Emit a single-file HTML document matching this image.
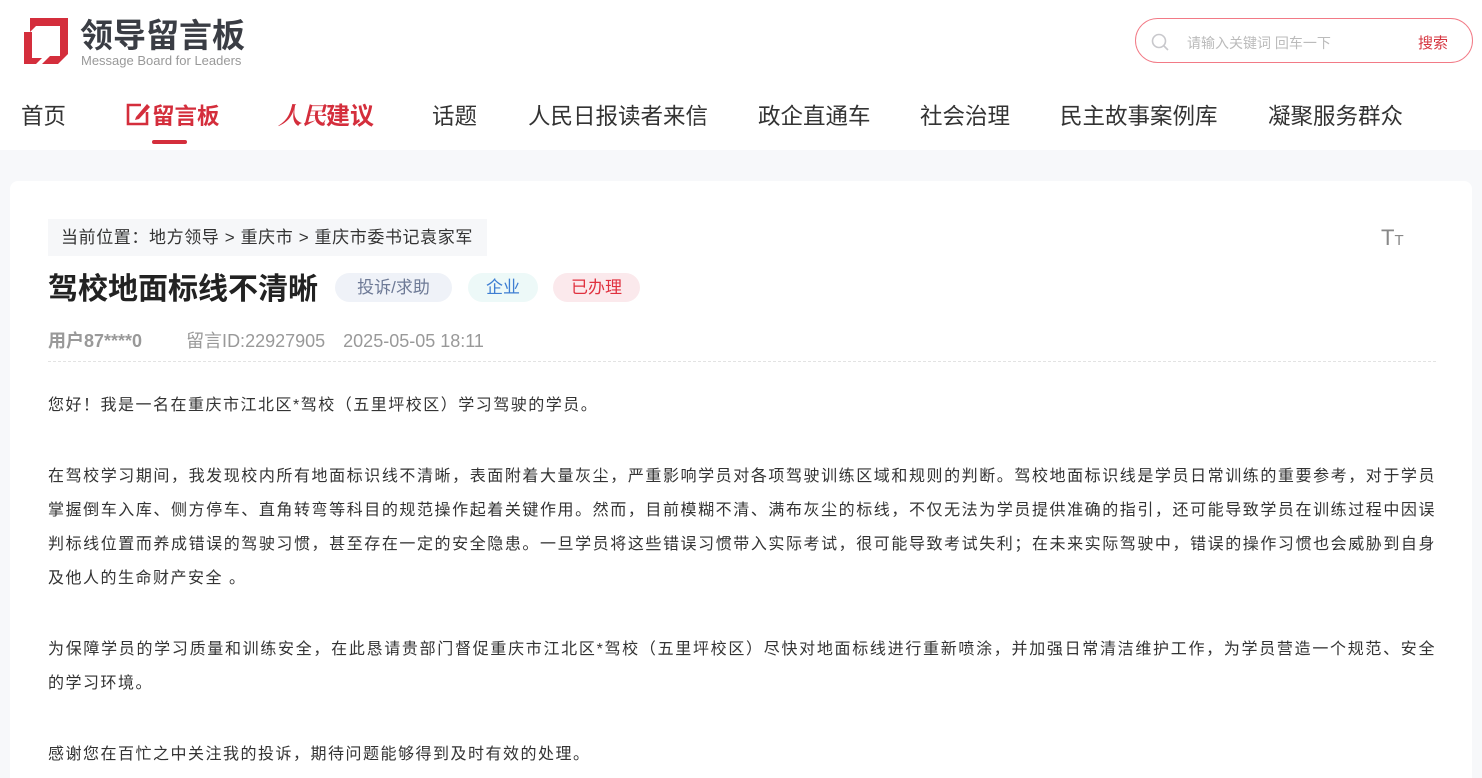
<!DOCTYPE html>
<html><head><meta charset="utf-8"><style>
*{margin:0;padding:0;box-sizing:border-box}
html,body{width:1482px;height:778px;overflow:hidden}
body{background:#f7f8fa;font-family:"Liberation Sans","Noto Sans CJK SC",sans-serif;color:#333;position:relative}
.top{background:#fff;height:150px;position:relative}
.logo{position:absolute;left:22px;top:18px}
.lt{position:absolute;left:80px;top:16px;font-size:33px;font-weight:bold;color:#3a3d44;letter-spacing:0;line-height:40px}
.le{position:absolute;left:81px;top:53px;font-size:13px;color:#999;white-space:nowrap}
.search{position:absolute;left:1135px;top:18px;width:338px;height:45px;border:1px solid #f27a86;border-radius:23px}
.search .ph{position:absolute;left:51px;top:14px;font-size:14px;color:#bbb}
.search .btn{position:absolute;right:24px;top:13px;font-size:15px;color:#d63640}
.nav{position:absolute;top:101px;left:0;font-size:22.5px;color:#333;white-space:nowrap}
.nav span{position:absolute;top:0;line-height:32px}
.card{position:absolute;left:10px;top:181px;width:1462px;height:597px;background:#fff;border-radius:8px 8px 0 0}
.crumb{position:absolute;left:38px;top:38px;height:37px;width:439px;background:#f6f7f9;font-size:17px;letter-spacing:0.6px;line-height:37px;padding-left:13px;color:#333;white-space:nowrap}
h1{position:absolute;left:38px;top:89px;font-size:30px;font-weight:bold;color:#222;line-height:40px}
.tag{position:absolute;top:92px;height:29px;border-radius:15px;font-size:17px;line-height:29px;text-align:center}
.meta{position:absolute;left:38px;top:146px;font-size:18px;color:#999;white-space:nowrap}
.line{position:absolute;left:38px;right:36px;top:180px;border-top:1px dashed #e3e3e3}
.body{position:absolute;left:38px;top:208px;width:1388px;font-size:16px;letter-spacing:1.5px;line-height:34px;color:#333;text-align:justify}
.body p{margin-bottom:37px}
</style></head><body>
<div class="top">
<svg class="logo" width="48" height="48" viewBox="0 0 48 48"><path d="M8 0 H46 V36 L36 46 H20 L28 38 H38 V8 H14 L8 14Z" fill="#d42e3c"/><path d="M2 14 H10 V40 H20 L14 46 H2Z" fill="#d42e3c"/></svg>
<div class="lt">领导留言板</div>
<div class="le">Message Board for Leaders</div>
<div class="search">
<svg style="position:absolute;left:15px;top:14px" width="18" height="18" viewBox="0 0 18 18"><circle cx="8" cy="8" r="6.5" fill="none" stroke="#c8c8cc" stroke-width="1.6"/><path d="M13 13 L17 17" stroke="#c8c8cc" stroke-width="1.6"/></svg>
<span class="ph">请输入关键词 回车一下</span><span class="btn">搜索</span></div>
<div class="nav">
<span style="left:21px">首页</span>
<span style="left:126px;color:#d42e3c;font-weight:bold"><svg width="26" height="24" viewBox="0 0 26 24" style="vertical-align:-2px"><path d="M15 3 H2 V22 H21 V10" fill="none" stroke="#d42e3c" stroke-width="2.6"/><path d="M10 15 L21 2 L24 5 L13 17 L9 18Z" fill="#d42e3c"/></svg>留言板</span>
<div style="position:absolute;left:152px;top:39px;width:35px;height:4px;border-radius:2px;background:#d42e3c"></div>
<span style="left:278px;color:#d42e3c;font-weight:bold;font-size:24px;font-style:italic;font-family:'Liberation Serif','Noto Serif CJK SC',serif">人民<span style="position:static;font-style:normal;font-family:'Liberation Sans','Noto Sans CJK SC',sans-serif">建议</span></span>
<span style="left:432px">话题</span>
<span style="left:528px">人民日报读者来信</span>
<span style="left:758px">政企直通车</span>
<span style="left:920px">社会治理</span>
<span style="left:1060px">民主故事案例库</span>
<span style="left:1268px">凝聚服务群众</span>
</div>
</div>
<div class="card">
<div class="crumb">当前位置：地方领导 &gt; 重庆市 &gt; 重庆市委书记袁家军</div>
<div style="position:absolute;left:1371px;top:44px;font-size:22px;color:#888">T<span style="font-size:15px">T</span></div>
<h1>驾校地面标线不清晰</h1>
<div class="tag" style="left:325px;width:117px;background:#eff2f8;color:#6e7a96">投诉/求助</div>
<div class="tag" style="left:458px;width:70px;background:#edf9f8;color:#3e7ed2">企业</div>
<div class="tag" style="left:543px;width:87px;background:#fbe9ec;color:#e0313f">已办理</div>
<div class="meta"><b style="color:#999">用户87****0</b><span style="margin-left:44px">留言ID:22927905</span><span style="margin-left:18px">2025-05-05 18:11</span></div>
<div class="line"></div>
<div class="body">
<p>您好！我是一名在重庆市江北区*驾校（五里坪校区）学习驾驶的学员。</p>
<p>在驾校学习期间，我发现校内所有地面标识线不清晰，表面附着大量灰尘，严重影响学员对各项驾驶训练区域和规则的判断。驾校地面标识线是学员日常训练的重要参考，对于学员掌握倒车入库、侧方停车、直角转弯等科目的规范操作起着关键作用。然而，目前模糊不清、满布灰尘的标线，不仅无法为学员提供准确的指引，还可能导致学员在训练过程中因误判标线位置而养成错误的驾驶习惯，甚至存在一定的安全隐患。一旦学员将这些错误习惯带入实际考试，很可能导致考试失利；在未来实际驾驶中，错误的操作习惯也会威胁到自身及他人的生命财产安全 。</p>
<p>为保障学员的学习质量和训练安全，在此恳请贵部门督促重庆市江北区*驾校（五里坪校区）尽快对地面标线进行重新喷涂，并加强日常清洁维护工作，为学员营造一个规范、安全的学习环境。</p>
<p>感谢您在百忙之中关注我的投诉，期待问题能够得到及时有效的处理。</p>
</div>
</div>
</body></html>
